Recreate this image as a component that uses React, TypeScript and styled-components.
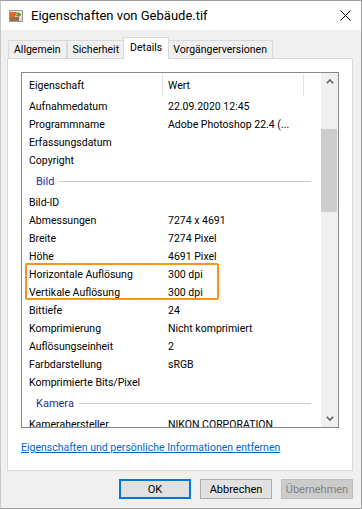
import React from "react";
import styled, { createGlobalStyle } from "styled-components";

const GlobalStyle = createGlobalStyle`
  html, body {
    margin: 0;
    padding: 0;
    background: #f0f0f0;
  }
  body {
    font-family: Roboto, "Liberation Sans", sans-serif;
    color: #000;
  }
`;

const Window = styled.div`
  width: 362px;
  height: 509px;
  box-sizing: border-box;
  border: 1px solid #a0a0a0;
  border-left-color: #c8c8c8;
  background: #f0f0f0;
  display: flex;
  flex-direction: column;
`;

const TitleBar = styled.div`
  height: 29px;
  background: #fff;
  display: flex;
  align-items: center;
  padding: 0 10px 0 8px;
  font-size: 13px;
`;

const TitleText = styled.span`
  flex: 1;
  margin-left: 8px;
  color: #000;
`;

const Body = styled.div`
  flex: 1;
  display: flex;
  flex-direction: column;
  padding: 7px 8px 0 6px;
`;

const TabRow = styled.div`
  display: flex;
  align-items: flex-end;
  height: 21px;
  padding-left: 1px;
  position: relative;
  z-index: 1;
`;

const Tab = styled.div<{ $active?: boolean }>`
  box-sizing: border-box;
  height: ${(p) => (p.$active ? "22px" : "18px")};
  margin: ${(p) => (p.$active ? "0 -2px -1px -2px" : "0")};
  padding: ${(p) => (p.$active ? "0 6px 2px" : "0 5px")};
  border: 1px solid #d9d9d9;
  border-bottom: none;
  background: ${(p) => (p.$active ? "#fff" : "#f0f0f0")};
  display: flex;
  align-items: center;
  font-size: 10.5px;
  position: relative;
  z-index: ${(p) => (p.$active ? 2 : 0)};
  & + & {
    border-left: ${(p) => (p.$active ? "1px solid #d9d9d9" : "none")};
  }
`;

const Panel = styled.div`
  height: 413px;
  box-sizing: border-box;
  border: 1px solid #d9d9d9;
  background: #fff;
  padding: 13px 13px 0 13px;
  display: flex;
  flex-direction: column;
`;

const ListView = styled.div`
  height: 356px;
  box-sizing: border-box;
  border: 1px solid #828790;
  display: flex;
  overflow: hidden;
`;

const ListContent = styled.div`
  flex: 1;
  overflow: hidden;
  font-size: 10.5px;
`;

const HeaderRow = styled.div`
  height: 24px;
  display: grid;
  grid-template-columns: 141px 141px 1fr;
  align-items: center;
`;

const HeaderCell = styled.div<{ $pad?: number; $divider?: boolean }>`
  height: 23px;
  display: flex;
  align-items: center;
  padding-left: ${(p) => p.$pad ?? 5}px;
  border-right: ${(p) => (p.$divider ? "1px solid #e5e5e5" : "none")};
  box-sizing: border-box;
`;

const Row = styled.div`
  height: 18px;
  display: grid;
  grid-template-columns: 146px 1fr;
  align-items: center;
  white-space: nowrap;
`;

const NameCell = styled.span`
  padding-left: 7px;
`;

const ValueCell = styled.span``;

const GroupRow = styled.div`
  height: 24px;
  display: flex;
  align-items: center;
  padding: 0 10px 0 14px;
  color: #22309a;
  font-size: 11px;
  &::after {
    content: "";
    flex: 1;
    height: 1px;
    margin-left: 5px;
    background: #c5cbdc;
  }
`;

const Marked = styled.div`
  position: relative;
  &::after {
    content: "";
    position: absolute;
    left: 3px;
    top: -2px;
    width: 194px;
    bottom: 1px;
    box-sizing: border-box;
    border: 2px solid #f7941d;
    border-radius: 2px;
    pointer-events: none;
  }
`;

const ScrollBar = styled.div`
  width: 17px;
  background: #f0f0f0;
  display: flex;
  flex-direction: column;
`;

const ScrollArrow = styled.div`
  height: 17px;
  display: flex;
  align-items: center;
  justify-content: center;
`;

const ScrollTrack = styled.div`
  flex: 1;
  padding: 39px 1px 0 0;
`;

const ScrollThumb = styled.div`
  height: 83px;
  background: #cdcdcd;
`;

const RemoveLink = styled.a`
  margin-top: 13px;
  font-size: 10.5px;
  color: #0066cc;
  text-decoration: underline;
  cursor: pointer;
`;

const Footer = styled.div`
  display: flex;
  justify-content: flex-end;
  gap: 9px;
  padding-top: 8px;
`;

const Button = styled.button<{ $default?: boolean }>`
  width: 72px;
  height: 20px;
  box-sizing: border-box;
  font-family: inherit;
  font-size: 11px;
  padding: 0;
  background: ${(p) => (p.disabled ? "#cccccc" : "#e1e1e1")};
  color: ${(p) => (p.disabled ? "#838383" : "#000")};
  border: ${(p) =>
    p.$default ? "2px solid #0078d7" : p.disabled ? "1px solid #bfbfbf" : "1px solid #adadad"};
`;

type Item =
  | { kind: "row"; name: string; value?: string; mark?: boolean }
  | { kind: "group"; title: string };

const items: Item[] = [
  { kind: "row", name: "Aufnahmedatum", value: "22.09.2020 12:45" },
  { kind: "row", name: "Programmname", value: "Adobe Photoshop 22.4 (..." },
  { kind: "row", name: "Erfassungsdatum" },
  { kind: "row", name: "Copyright" },
  { kind: "group", title: "Bild" },
  { kind: "row", name: "Bild-ID" },
  { kind: "row", name: "Abmessungen", value: "7274 x 4691" },
  { kind: "row", name: "Breite", value: "7274 Pixel" },
  { kind: "row", name: "Höhe", value: "4691 Pixel" },
  { kind: "row", name: "Horizontale Auflösung", value: "300 dpi", mark: true },
  { kind: "row", name: "Vertikale Auflösung", value: "300 dpi", mark: true },
  { kind: "row", name: "Bittiefe", value: "24" },
  { kind: "row", name: "Komprimierung", value: "Nicht komprimiert" },
  { kind: "row", name: "Auflösungseinheit", value: "2" },
  { kind: "row", name: "Farbdarstellung", value: "sRGB" },
  { kind: "row", name: "Komprimierte Bits/Pixel" },
  { kind: "group", title: "Kamera" },
  { kind: "row", name: "Kamerahersteller", value: "NIKON CORPORATION" },
];

const FileIcon = () => (
  <svg width="14" height="12" viewBox="0 0 14 12">
    <rect x="0.5" y="0.5" width="13" height="11" fill="#e8e8e8" stroke="#9a9a9a" />
    <path d="M1 2 H8 L6 7 H1 Z" fill="#e8622c" />
    <path d="M8 3 C10 2 12 3 12 5 C11 7 9 7 7 6 Z" fill="#5aa02c" />
    <rect x="1" y="7" width="9" height="4" fill="#9b6b4a" />
    <rect x="10" y="8" width="3" height="3" fill="#d9d9d9" />
  </svg>
);

const CloseIcon = () => (
  <svg width="11" height="11" viewBox="0 0 11 11">
    <path d="M0.5 0.5 L10.5 10.5 M10.5 0.5 L0.5 10.5" stroke="#000" strokeWidth="1" />
  </svg>
);

const Chevron = ({ up }: { up?: boolean }) => (
  <svg width="8" height="5" viewBox="0 0 8 5">
    <path
      d={up ? "M0.8 4.2 L4 1 L7.2 4.2" : "M0.8 0.8 L4 4 L7.2 0.8"}
      fill="none"
      stroke="#606060"
      strokeWidth="1.6"
    />
  </svg>
);

const renderItem = (item: Item, i: number) =>
  item.kind === "group" ? (
    <GroupRow key={i}>{item.title}</GroupRow>
  ) : (
    <Row key={i}>
      <NameCell>{item.name}</NameCell>
      <ValueCell>{item.value}</ValueCell>
    </Row>
  );

const App: React.FC = () => {
  const before = items.filter((_, i) => i < 9);
  const marked = items.filter((it) => it.kind === "row" && it.mark);
  const after = items.filter((_, i) => i > 10);

  return (
    <>
      <GlobalStyle />
      <Window>
        <TitleBar>
          <FileIcon />
          <TitleText>Eigenschaften von Gebäude.tif</TitleText>
          <CloseIcon />
        </TitleBar>
        <Body>
          <TabRow>
            <Tab>Allgemein</Tab>
            <Tab>Sicherheit</Tab>
            <Tab $active>Details</Tab>
            <Tab>Vorgängerversionen</Tab>
          </TabRow>
          <Panel>
            <ListView>
              <ListContent>
                <HeaderRow>
                  <HeaderCell $pad={7} $divider>
                    Eigenschaft
                  </HeaderCell>
                  <HeaderCell $pad={5} $divider>
                    Wert
                  </HeaderCell>
                  <HeaderCell />
                </HeaderRow>
                {before.map(renderItem)}
                <Marked>{marked.map((it, i) => renderItem(it, 100 + i))}</Marked>
                {after.map((it, i) => renderItem(it, 200 + i))}
              </ListContent>
              <ScrollBar>
                <ScrollArrow>
                  <Chevron up />
                </ScrollArrow>
                <ScrollTrack>
                  <ScrollThumb />
                </ScrollTrack>
                <ScrollArrow>
                  <Chevron />
                </ScrollArrow>
              </ScrollBar>
            </ListView>
            <RemoveLink>Eigenschaften und persönliche Informationen entfernen</RemoveLink>
          </Panel>
          <Footer>
            <Button $default>OK</Button>
            <Button>Abbrechen</Button>
            <Button disabled>Übernehmen</Button>
          </Footer>
        </Body>
      </Window>
    </>
  );
};

export default App;
